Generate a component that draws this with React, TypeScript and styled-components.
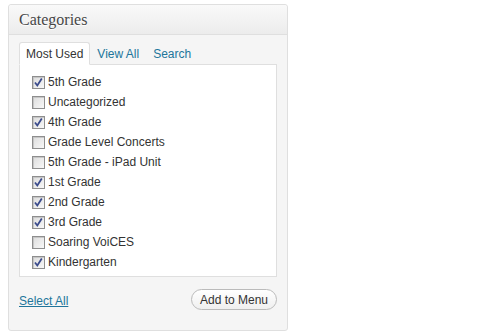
import { FC } from 'react'
import styled, { createGlobalStyle } from 'styled-components'

const GlobalStyle = createGlobalStyle`
  body {
    margin: 0;
    background: #fff;
    font-family: 'Liberation Sans', Arial, sans-serif;
  }
`

const Panel = styled.div`
  margin: 4px 0 0 8px;
  width: 280px;
  height: 327px;
  box-sizing: border-box;
  border: 1px solid #dfdfdf;
  border-radius: 3px;
  background: #f5f5f5;
  box-shadow: 0 1px 0 #fff inset;
  display: flex;
  flex-direction: column;
`

const Header = styled.h3`
  margin: 0;
  height: 29px;
  border-bottom: 1px solid #dfdfdf;
  background: linear-gradient(to bottom, #f9f9f9, #ececec);
  border-radius: 3px 3px 0 0;
  padding: 0 10px;
  display: flex;
  align-items: center;
  font-family: 'Liberation Serif', Georgia, serif;
  font-weight: normal;
  font-size: 16px;
  color: #464646;
  text-shadow: 0 1px 0 #fff;
`

const Body = styled.div`
  padding: 6px 10px 0 10px;
  display: flex;
  flex-direction: column;
`

const Tabs = styled.div`
  display: flex;
  align-items: flex-end;
  height: 23px;
  position: relative;
  z-index: 1;
`

const Tab = styled.div<{ active?: boolean }>`
  height: 23px;
  box-sizing: border-box;
  padding: 0 6px;
  display: flex;
  align-items: center;
  font-size: 12px;
  color: ${({ active }) => (active ? '#333' : '#21759b')};
  background: ${({ active }) => (active ? '#fff' : 'transparent')};
  border: 1px solid ${({ active }) => (active ? '#dfdfdf' : 'transparent')};
  border-bottom: 1px solid ${({ active }) => (active ? '#fff' : 'transparent')};
  border-radius: 3px 3px 0 0;
  margin-bottom: -1px;
`

const List = styled.ul`
  list-style: none;
  margin: 0;
  padding: 7px 0 4px 12px;
  background: #fff;
  border: 1px solid #dfdfdf;
`

const Row = styled.li`
  height: 20px;
  display: flex;
  align-items: center;
  font-size: 12px;
  color: #333;
`

const Box = styled.span`
  width: 13px;
  height: 13px;
  box-sizing: border-box;
  border: 1px solid #8e8e8e;
  background: linear-gradient(135deg, #dcdcdc, #f8f8f8);
  box-shadow: inset 1px 1px 0 #c6c6c6;
  margin-right: 3px;
  display: flex;
  align-items: center;
  justify-content: center;
`

const Footer = styled.div`
  margin-top: 12px;
  display: flex;
  align-items: center;
  justify-content: space-between;
`

const Link = styled.a`
  font-size: 12px;
  color: #21759b;
  text-decoration: underline;
  padding-top: 3px;
`

const Button = styled.button`
  height: 21px;
  padding: 0 8px;
  border: 1px solid #bbb;
  border-radius: 11px;
  background: linear-gradient(to bottom, #fff, #efefef);
  font-family: 'Liberation Sans', Arial, sans-serif;
  font-size: 12px;
  color: #333;
`

const Check: FC = () => (
  <svg width='11' height='11' viewBox='0 0 11 11'>
    <path d='M2 5.5 L4.3 8.5 L8.8 1.5' fill='none' stroke='#3b4b8c' strokeWidth='1.8' />
  </svg>
)

const categories: [string, boolean][] = [
  ['5th Grade', true],
  ['Uncategorized', false],
  ['4th Grade', true],
  ['Grade Level Concerts', false],
  ['5th Grade - iPad Unit', false],
  ['1st Grade', true],
  ['2nd Grade', true],
  ['3rd Grade', true],
  ['Soaring VoiCES', false],
  ['Kindergarten', true],
]

export default function App() {
  return (
    <>
      <GlobalStyle />
      <Panel>
        <Header>Categories</Header>
        <Body>
          <Tabs>
            <Tab active>Most Used</Tab>
            <Tab>View All</Tab>
            <Tab>Search</Tab>
          </Tabs>
          <List>
            {categories.map(([name, checked]) => (
              <Row key={name}>
                <Box>{checked && <Check />}</Box>
                {name}
              </Row>
            ))}
          </List>
          <Footer>
            <Link href='#'>Select All</Link>
            <Button>Add to Menu</Button>
          </Footer>
        </Body>
      </Panel>
    </>
  )
}
